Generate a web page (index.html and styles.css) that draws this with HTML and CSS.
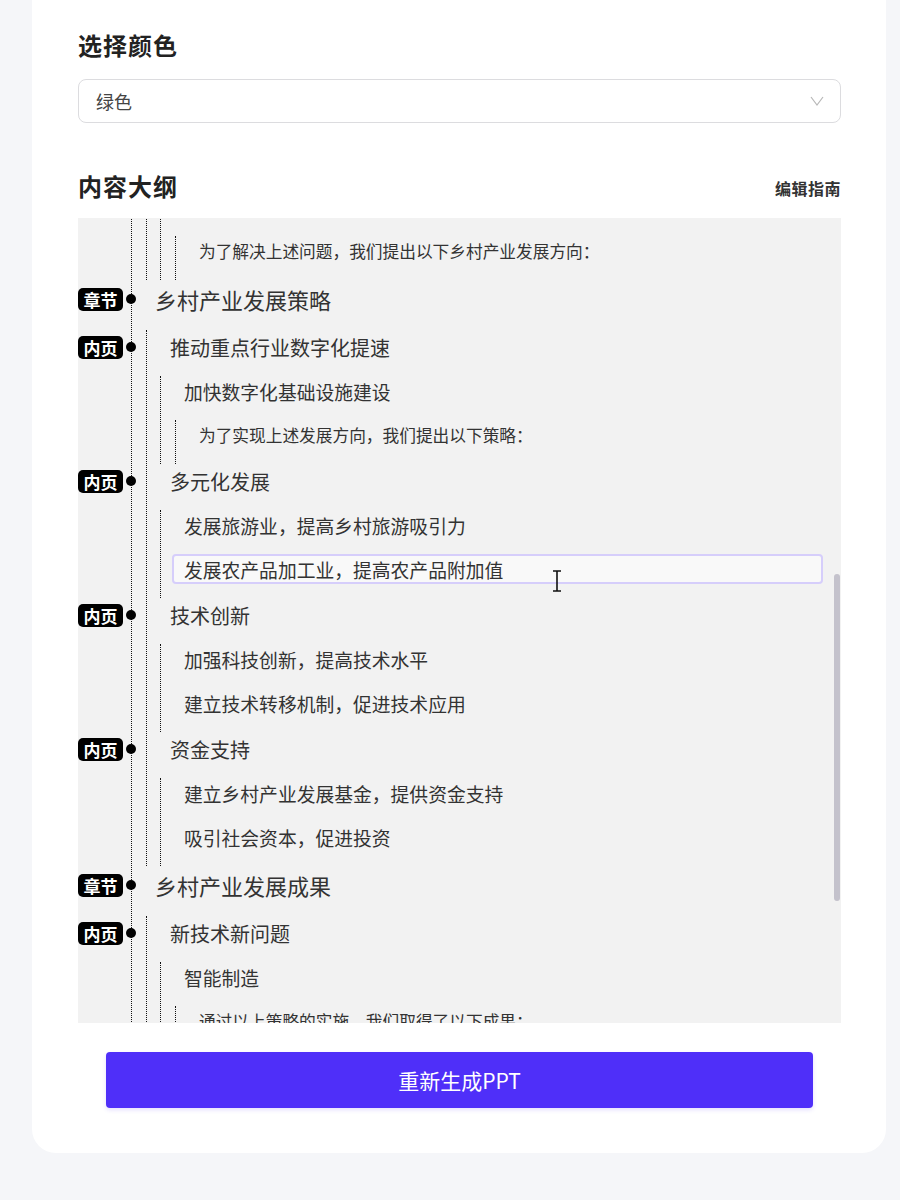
FILE: index.html
```html
<!DOCTYPE html>
<html lang="zh-CN">

<head>
    <meta charset="UTF-8">
    <meta name="viewport" content="width=device-width, initial-scale=1.0">
    <title>重新生成PPT</title>
    <link rel="stylesheet" href="styles.css">
</head>

<body>
    <div class="card">
        <div class="label">选择颜色</div>
        <div class="select">
            <span>绿色</span>
            <svg class="chevron" width="14" height="10" viewBox="0 0 14 10"><polyline points="1,1 7,9 13,1" fill="none" stroke="#b8b8b8" stroke-width="1.2"/></svg>
        </div>

        <div class="section-head">
            <div class="label">内容大纲</div>
            <a class="guide">编辑指南</a>
        </div>

        <div class="outline-wrap">
            <div class="outline">
                <div class="tree">
                    <!-- 第一章 -->
                    <div class="chapter">
                        <div class="row lv0"><span class="badge">章节</span><span class="dot"></span><div class="field">乡村产业发展现状</div></div>
                        <div class="children">
                            <div class="page">
                                <div class="row lv1"><span class="badge">内页</span><span class="dot"></span><div class="field">产业结构单一</div></div>
                                <div class="children">
                                    <div class="node">
                                        <div class="row lv2"><div class="field">传统农业占比过高</div></div>
                                        <div class="children">
                                            <div class="row lv3"><div class="field">农业生产方式较为粗放，附加值较低</div></div>
                                        </div>
                                    </div>
                                    <div class="node">
                                        <div class="row lv2"><div class="field">二三产业发展滞后</div></div>
                                    </div>
                                </div>
                            </div>
                            <div class="page">
                                <div class="row lv1"><span class="badge">内页</span><span class="dot"></span><div class="field">基础设施薄弱</div></div>
                                <div class="children">
                                    <div class="node"><div class="row lv2"><div class="field">交通物流体系不完善</div></div></div>
                                    <div class="node"><div class="row lv2"><div class="field">信息化水平较低</div></div></div>
                                </div>
                            </div>
                            <div class="page">
                                <div class="row lv1"><span class="badge">内页</span><span class="dot"></span><div class="field">人才流失严重</div></div>
                                <div class="children">
                                    <div class="node"><div class="row lv2"><div class="field">青壮年劳动力外流</div></div></div>
                                    <div class="node"><div class="row lv2"><div class="field">专业技术人才匮乏</div></div></div>
                                </div>
                            </div>
                            <div class="page">
                                <div class="row lv1"><span class="badge">内页</span><span class="dot"></span><div class="field">市场竞争力不足</div></div>
                                <div class="children">
                                    <div class="node"><div class="row lv2"><div class="field">品牌建设滞后</div></div></div>
                                    <div class="node">
                                        <div class="row lv2"><div class="field">营销渠道单一</div></div>
                                        <div class="children">
                                            <div class="row lv3"><div class="field">产品难以进入高端市场</div></div>
                                        </div>
                                    </div>
                                    <div class="node"><div class="row lv2"><div class="field">标准化程度低</div></div></div>
                                </div>
                            </div>
                            <div class="page">
                                <div class="row lv1"><span class="badge">内页</span><span class="dot"></span><div class="field">发展方向</div></div>
                                <div class="children">
                                    <div class="node"><div class="row lv2"><div class="field">发展特色优势产业</div></div></div>
                                    <div class="node"><div class="row lv2"><div class="field">培育新型经营主体</div></div></div>
                                    <div class="node">
                                        <div class="row lv2"><div class="field">推动产业融合发展</div></div>
                                        <div class="children">
                                            <div class="row lv3" id="anchor"><div class="field">为了解决上述问题，我们提出以下乡村产业发展方向：</div></div>
                                        </div>
                                    </div>
                                </div>
                            </div>
                        </div>
                    </div>

                    <!-- 第二章 -->
                    <div class="chapter">
                        <div class="row lv0"><span class="badge">章节</span><span class="dot"></span><div class="field">乡村产业发展策略</div></div>
                        <div class="children">
                            <div class="page">
                                <div class="row lv1"><span class="badge">内页</span><span class="dot"></span><div class="field">推动重点行业数字化提速</div></div>
                                <div class="children">
                                    <div class="node">
                                        <div class="row lv2"><div class="field">加快数字化基础设施建设</div></div>
                                        <div class="children">
                                            <div class="row lv3"><div class="field">为了实现上述发展方向，我们提出以下策略：</div></div>
                                        </div>
                                    </div>
                                </div>
                            </div>
                            <div class="page">
                                <div class="row lv1"><span class="badge">内页</span><span class="dot"></span><div class="field">多元化发展</div></div>
                                <div class="children">
                                    <div class="node"><div class="row lv2"><div class="field">发展旅游业，提高乡村旅游吸引力</div></div></div>
                                    <div class="node">
                                        <div class="row lv2"><div class="field active">发展农产品加工业，提高农产品附加值
                                            <svg class="ibeam" width="10" height="22" viewBox="0 0 10 22"><path d="M1 1h8M1 21h8M5 1v20" fill="none" stroke="#111" stroke-width="1.6"/></svg>
                                        </div></div>
                                    </div>
                                </div>
                            </div>
                            <div class="page">
                                <div class="row lv1"><span class="badge">内页</span><span class="dot"></span><div class="field">技术创新</div></div>
                                <div class="children">
                                    <div class="node"><div class="row lv2"><div class="field">加强科技创新，提高技术水平</div></div></div>
                                    <div class="node"><div class="row lv2"><div class="field">建立技术转移机制，促进技术应用</div></div></div>
                                </div>
                            </div>
                            <div class="page">
                                <div class="row lv1"><span class="badge">内页</span><span class="dot"></span><div class="field">资金支持</div></div>
                                <div class="children">
                                    <div class="node"><div class="row lv2"><div class="field">建立乡村产业发展基金，提供资金支持</div></div></div>
                                    <div class="node"><div class="row lv2"><div class="field">吸引社会资本，促进投资</div></div></div>
                                </div>
                            </div>
                        </div>
                    </div>

                    <!-- 第三章 -->
                    <div class="chapter">
                        <div class="row lv0"><span class="badge">章节</span><span class="dot"></span><div class="field">乡村产业发展成果</div></div>
                        <div class="children">
                            <div class="page">
                                <div class="row lv1"><span class="badge">内页</span><span class="dot"></span><div class="field">新技术新问题</div></div>
                                <div class="children">
                                    <div class="node">
                                        <div class="row lv2"><div class="field">智能制造</div></div>
                                        <div class="children">
                                            <div class="row lv3"><div class="field">通过以上策略的实施，我们取得了以下成果：</div></div>
                                        </div>
                                    </div>
                                    <div class="node"><div class="row lv2"><div class="field">生产效率显著提升</div></div></div>
                                </div>
                            </div>
                            <div class="page">
                                <div class="row lv1"><span class="badge">内页</span><span class="dot"></span><div class="field">乡村旅游</div></div>
                                <div class="children">
                                    <div class="node"><div class="row lv2"><div class="field">游客数量大幅增长</div></div></div>
                                    <div class="node"><div class="row lv2"><div class="field">带动农民增收</div></div></div>
                                </div>
                            </div>
                        </div>
                    </div>

                    <div class="chapter">
                        <div class="row lv0"><span class="badge">章节</span><span class="dot"></span><div class="field">总结与展望</div></div>
                        <div class="children">
                            <div class="page">
                                <div class="row lv1"><span class="badge">内页</span><span class="dot"></span><div class="field">未来展望</div></div>
                            </div>
                        </div>
                    </div>
                </div>
            </div>
            <div class="thumb"></div>
        </div>

        <div class="actions">
            <button class="btn">重新生成PPT</button>
        </div>
    </div>
    <script src="script.js"></script>
</body>

</html>
```

FILE: styles.css
```css
* {
    box-sizing: border-box;
}

body {
    margin: 0;
    min-height: 1200px;
    background-color: #f5f6f9;
    font-family: "Noto Sans CJK SC", "Noto Sans", sans-serif;
    color: #333;
}

.card {
    margin: 0 14px 0 32px;
    padding: 30px 45px 45px 46px;
    background-color: #fff;
    border-radius: 0 0 24px 24px;
}

.label {
    font-size: 24px;
    line-height: 30px;
    font-weight: 700;
    letter-spacing: 1px;
    color: #222;
}

.select {
    margin-top: 19px;
    height: 44px;
    border: 1px solid #dcdcdf;
    border-radius: 8px;
    display: flex;
    align-items: center;
    justify-content: space-between;
    padding: 0 16px 0 17px;
    font-size: 18px;
    color: #444;
}

.section-head {
    margin-top: 48px;
    display: flex;
    align-items: flex-end;
    justify-content: space-between;
}

.guide {
    font-size: 16px;
    font-weight: 700;
    line-height: 26px;
    letter-spacing: 0.5px;
    color: #333;
    cursor: pointer;
}

/* outline */
.outline-wrap {
    position: relative;
    margin-top: 17px;
}

.outline {
    height: 805px;
    overflow: hidden;
    background-color: #f2f2f2;
}

.thumb {
    position: absolute;
    right: 1px;
    width: 6px;
    border-radius: 3px;
    background-color: #c4c2cc;
}

.tree {
    position: relative;
    margin: 0 18px 0 53px;
    border-left: 1px dotted #111;
}

.children {
    display: flow-root;
    margin-left: 14px;
    border-left: 1px dotted #111;
}

.page > .children {
    margin-left: 13px;
}

.row {
    display: flex;
    align-items: center;
}

.field {
    flex: 1;
    display: flex;
    align-items: center;
    margin-left: 11px;
    padding: 0 10px;
    border: 2px solid transparent;
    border-radius: 4px;
    white-space: nowrap;
    color: #333;
}

.field.active {
    position: relative;
    border-color: #d6cefb;
    background-color: #f9f9f9;
}

.ibeam {
    position: absolute;
    left: 378px;
    top: 14px;
}

.lv0 {
    margin-bottom: 12px;
}

.lv0 .field {
    height: 38px;
    font-size: 22px;
}

.lv1 {
    margin-bottom: 12px;
}

.lv1 .field {
    height: 34px;
    font-size: 20px;
}

.lv2,
.lv3 {
    margin-bottom: 14px;
}

.lv2 .field {
    height: 30px;
    font-size: 18.8px;
}

.lv3 .field {
    height: 30px;
    font-size: 16.7px;
}

.badge {
    position: absolute;
    left: -54px;
    width: 45px;
    height: 23px;
    border-radius: 5px;
    background-color: #000;
    color: #fff;
    font-size: 17px;
    font-weight: 700;
    line-height: 23px;
    text-align: center;
}

.dot {
    position: absolute;
    left: -6px;
    width: 10px;
    height: 10px;
    border-radius: 50%;
    background-color: #000;
}

.actions {
    margin-top: 29px;
    padding: 0 28px;
}

.btn {
    width: 100%;
    height: 56px;
    border: none;
    border-radius: 4px;
    background-color: #4f2ff9;
    box-shadow: 0 2px 4px rgba(79, 47, 249, 0.15);
    color: #fff;
    font-family: "Noto Sans CJK SC", "Noto Sans", sans-serif;
    font-size: 21px;
    cursor: pointer;
}
```

FILE: script.js
```js
let box = document.querySelector(".outline");
let anchor = document.getElementById("anchor");
let thumb = document.querySelector(".thumb");

box.scrollTop = anchor.getBoundingClientRect().top - box.getBoundingClientRect().top - 18;

// draw the scrollbar thumb from the scroll position
let ratio = box.clientHeight / box.scrollHeight;
thumb.style.height = Math.round(box.clientHeight * ratio) + "px";
thumb.style.top = Math.round(box.scrollTop * ratio) + "px";
```
